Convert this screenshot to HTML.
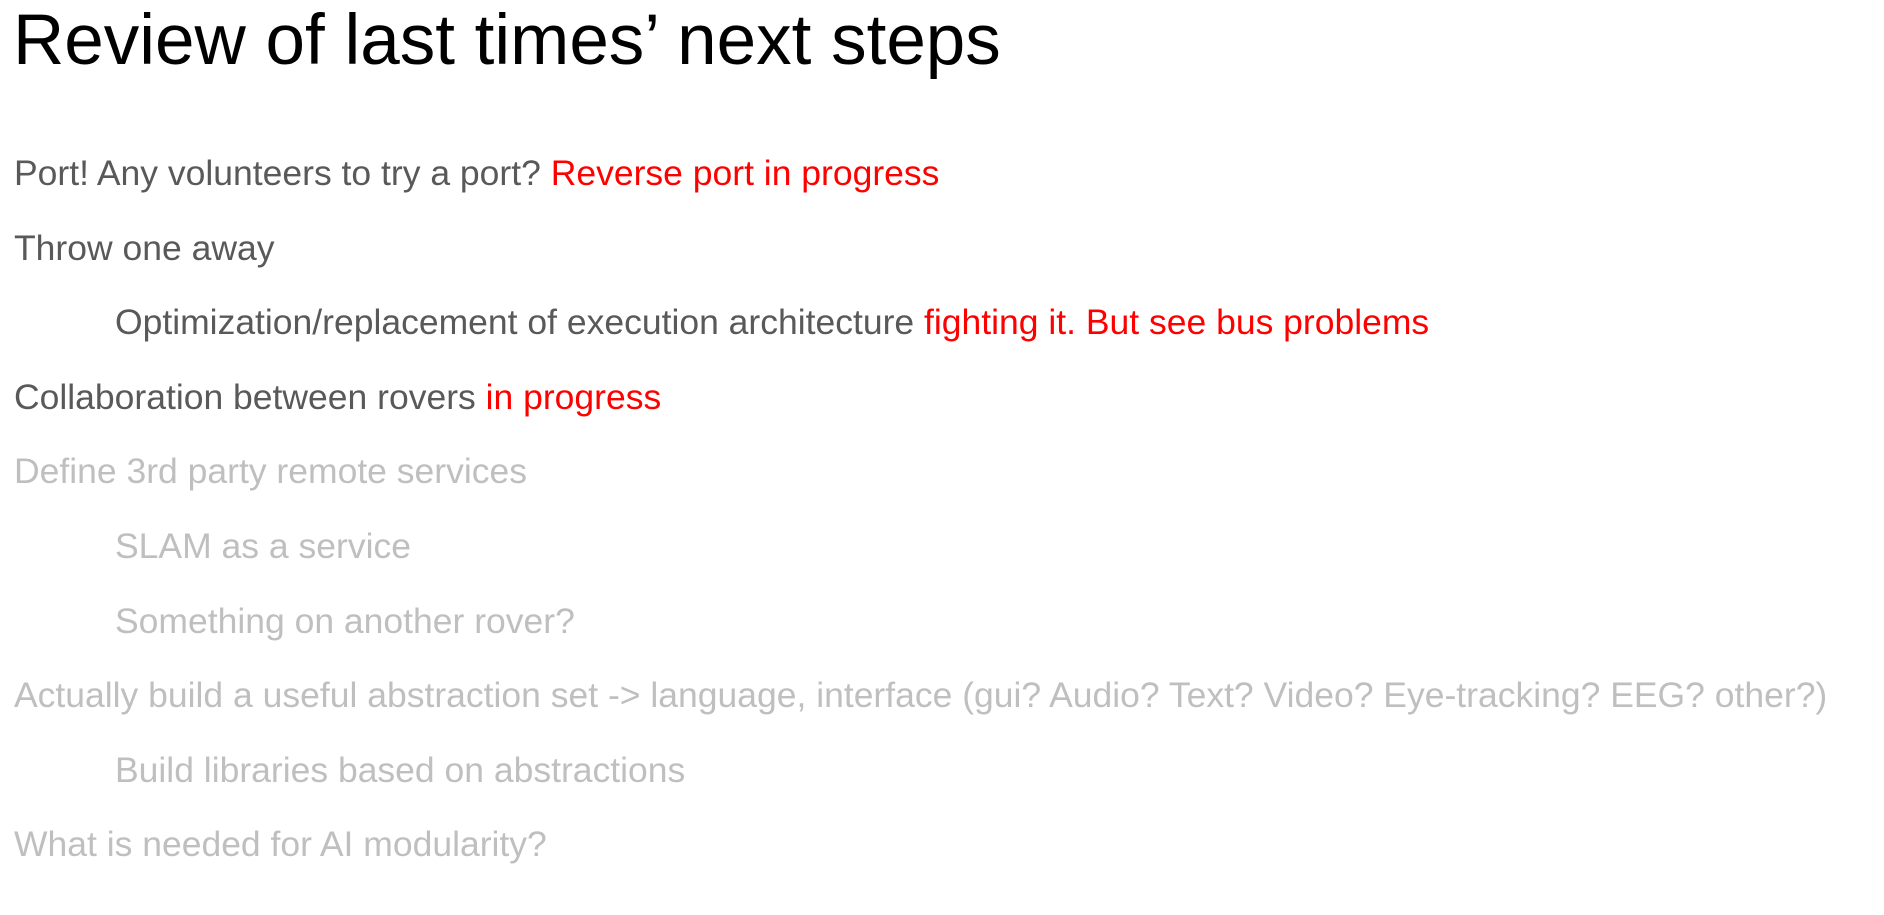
<!DOCTYPE html>
<html><head><meta charset="utf-8"><style>
body{margin:0;width:1884px;height:915px;background:#fff;font-family:"Liberation Sans",Arial,sans-serif;position:relative;overflow:hidden}
.t{position:absolute;left:13px;top:0;font-size:71px;color:#000;line-height:1;white-space:nowrap}
.l{position:absolute;font-size:35.5px;line-height:1;white-space:nowrap;color:#595959}
.r{color:#ff0000}.g{color:#bfbfbf}
</style></head><body>
<div class="t" style="top:5px">Review of last times’ next steps</div>
<div class="l" style="left:14px;top:156px">Port! Any volunteers to try a port? <span class="r">Reverse port in progress</span></div>
<div class="l" style="left:14px;top:231px">Throw one away</div>
<div class="l" style="left:115px;top:305px">Optimization/replacement of execution architecture <span class="r">fighting it. But see bus problems</span></div>
<div class="l" style="left:14px;top:380px">Collaboration between rovers <span class="r">in progress</span></div>
<div class="l g" style="left:14px;top:454px">Define 3rd party remote services</div>
<div class="l g" style="left:115px;top:529px">SLAM as a service</div>
<div class="l g" style="left:115px;top:604px">Something on another rover?</div>
<div class="l g" style="left:14px;top:678px">Actually build a useful abstraction set -&gt; language, interface (gui? Audio? Text? Video? Eye-tracking? EEG? other?)</div>
<div class="l g" style="left:115px;top:753px">Build libraries based on abstractions</div>
<div class="l g" style="left:14px;top:827px">What is needed for AI modularity?</div>
</body></html>
